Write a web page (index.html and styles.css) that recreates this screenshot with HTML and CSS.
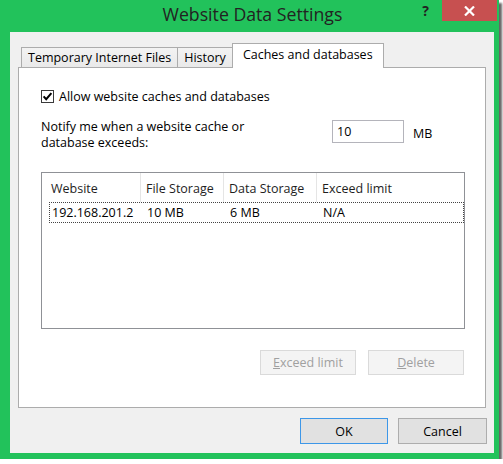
FILE: index.html
```html
<!DOCTYPE html>
<html lang="en">
<head>
  <meta charset="UTF-8">
  <meta name="viewport" content="width=device-width, initial-scale=1.0">
  <title>Website Data Settings</title>
  <link rel="stylesheet" href="styles.css">
</head>
<body>
  <div class="window">
    <!-- Title bar -->
    <div class="titlebar">
      <h1 class="title">Website Data Settings</h1>
      <div class="controls">
        <span class="help">?</span>
        <button class="close" aria-label="Close">
          <svg width="11" height="10" viewBox="0 0 11 10">
            <path d="M1 0.5 L10 9.5 M10 0.5 L1 9.5" stroke="#fff" stroke-width="2.2" fill="none"/>
          </svg>
        </button>
      </div>
    </div>

    <div class="client">
      <!-- Tabs -->
      <div class="tabs">
        <div class="tab">Temporary Internet Files</div>
        <div class="tab">History</div>
        <div class="tab active">Caches and databases</div>
      </div>

      <div class="panel">
        <label class="check">
          <span class="box">
            <svg width="13" height="13" viewBox="0 0 13 13">
              <rect x="0.5" y="0.5" width="12" height="12" fill="#fff" stroke="#3a3a3a"/>
              <path d="M2.6 6.4 L5.2 9.2 L10.4 3.2" stroke="#000" stroke-width="2" fill="none"/>
            </svg>
          </span>
          Allow website caches and databases
        </label>

        <div class="notify">
          <p>Notify me when a website cache or<br>database exceeds:</p>
          <input type="text" value="10">
          <span class="unit">MB</span>
        </div>

        <!-- List of sites -->
        <div class="list">
          <div class="list-head">
            <div>Website</div>
            <div>File Storage</div>
            <div>Data Storage</div>
            <div>Exceed limit</div>
          </div>
          <div class="list-row">
            <div>192.168.201.2</div>
            <div>10 MB</div>
            <div>6 MB</div>
            <div>N/A</div>
          </div>
        </div>

        <div class="panel-buttons">
          <button class="btn" disabled><u>E</u>xceed limit</button>
          <button class="btn" disabled><u>D</u>elete</button>
        </div>
      </div>

      <div class="dialog-buttons">
        <button class="btn btn-ok">OK</button>
        <button class="btn btn-cancel">Cancel</button>
      </div>
    </div>
  </div>
</body>
</html>
```

FILE: styles.css
```css
body {
  margin: 0;
  background: #fff;
  font-family: 'Open Sans', 'Segoe UI', sans-serif;
  font-size: 12.5px;
  color: #000;
}
* {
  box-sizing: border-box;
}
.window {
  width: 499px;
  height: 459px;
  background: #22c25b;
  display: flex;
  flex-direction: column;
  box-shadow: 3px 3px 2px rgba(0, 0, 0, 0.6);
}

/* Title bar */
.titlebar {
  height: 32px;
  display: grid;
  grid-template-columns: 1fr auto 1fr;
}
.title {
  grid-column: 2;
  margin: 0;
  padding-left: 6px;
  font-size: 17.7px;
  font-weight: normal;
  line-height: 29px;
  color: #222;
}
.controls {
  grid-column: 3;
  justify-self: end;
  display: flex;
  align-items: flex-start;
}
.help {
  margin-right: 13px;
  font-size: 14px;
  font-weight: bold;
  line-height: 21px;
  color: #222;
}
.close {
  width: 55px;
  height: 21px;
  margin-right: 2px;
  padding: 0;
  border: 0;
  background: #c75050;
  display: flex;
  align-items: center;
  justify-content: center;
}

/* Client area */
.client {
  flex: 1;
  margin: 0 5px 6px 10px;
  background: #f0f0f0;
  display: flex;
  flex-direction: column;
}
.tabs {
  position: relative;
  z-index: 1;
  display: flex;
  align-items: flex-end;
  height: 25px;
  margin: 11px 0 -1px 11px;
}
.tab {
  height: 20px;
  margin-bottom: 1px;
  padding: 0 6px;
  border: 1px solid #acacac;
  border-bottom: 0;
  background: linear-gradient(#f3f3f3, #e9e9e9);
  line-height: 19px;
}
.tab + .tab {
  border-left: 0;
}
.tab.active {
  height: 25px;
  margin-bottom: 0;
  margin-left: -1px;
  padding: 0 10px;
  border-left: 1px solid #acacac;
  background: #fff;
  line-height: 21px;
}
.panel {
  flex: 1;
  margin: 0 8px;
  padding: 20px 20px 0 22px;
  background: #fff;
  border: 1px solid #acacac;
  display: flex;
  flex-direction: column;
}
.check {
  display: flex;
  align-items: center;
  gap: 5px;
  height: 16px;
}
.box {
  display: flex;
}
.notify {
  display: flex;
  align-items: flex-start;
  margin-top: 15px;
}
.notify p {
  width: 291px;
  margin: 0;
  line-height: 16px;
}
.notify input {
  width: 72px;
  height: 23px;
  margin: 1px 0 0;
  padding: 0 4px;
  border: 1px solid #b4b4bb;
  font: inherit;
  color: #000;
}
.unit {
  margin-left: 9px;
  padding-top: 3px;
  line-height: 23px;
}

/* Site list */
.list {
  height: 157px;
  margin-top: 21px;
  border: 1px solid #8f9196;
}
.list-head {
  display: grid;
  grid-template-columns: 99px 83px 93px 1fr;
  height: 29px;
}
.list-head div {
  padding: 2px 0 0 5px;
  line-height: 27px;
  border-right: 1px solid #e5e5e5;
  color: #1e1e1e;
}
.list-head div:first-child {
  padding-left: 9px;
}
.list-head div:last-child {
  border-right: 0;
}
.list-row {
  display: grid;
  grid-template-columns: 91px 83px 93px 1fr;
  height: 21px;
  margin-left: 7px;
  border: 1px dotted #444;
  line-height: 19px;
}
.list-row div {
  padding-left: 6px;
}
.list-row div:first-child {
  padding-left: 2px;
}

/* Buttons */
.btn {
  height: 25px;
  margin: 0;
  padding: 0;
  border: 1px solid #adadad;
  background: #e1e1e1;
  font: inherit;
  color: #000;
}
.btn:disabled {
  background: #f4f4f4;
  border-color: #dadada;
  color: #a0a0a0;
}
.panel-buttons {
  display: flex;
  justify-content: flex-end;
  gap: 12px;
  margin-top: 21px;
  padding-right: 1px;
}
.panel-buttons .btn {
  width: 96px;
}
.dialog-buttons {
  display: flex;
  justify-content: flex-end;
  gap: 10px;
  margin: 10px 0 9px;
  padding-right: 7px;
}
.btn-ok {
  width: 88px;
  height: 26px;
  border-color: #3d97e8;
}
.btn-cancel {
  width: 89px;
  height: 26px;
}
```
